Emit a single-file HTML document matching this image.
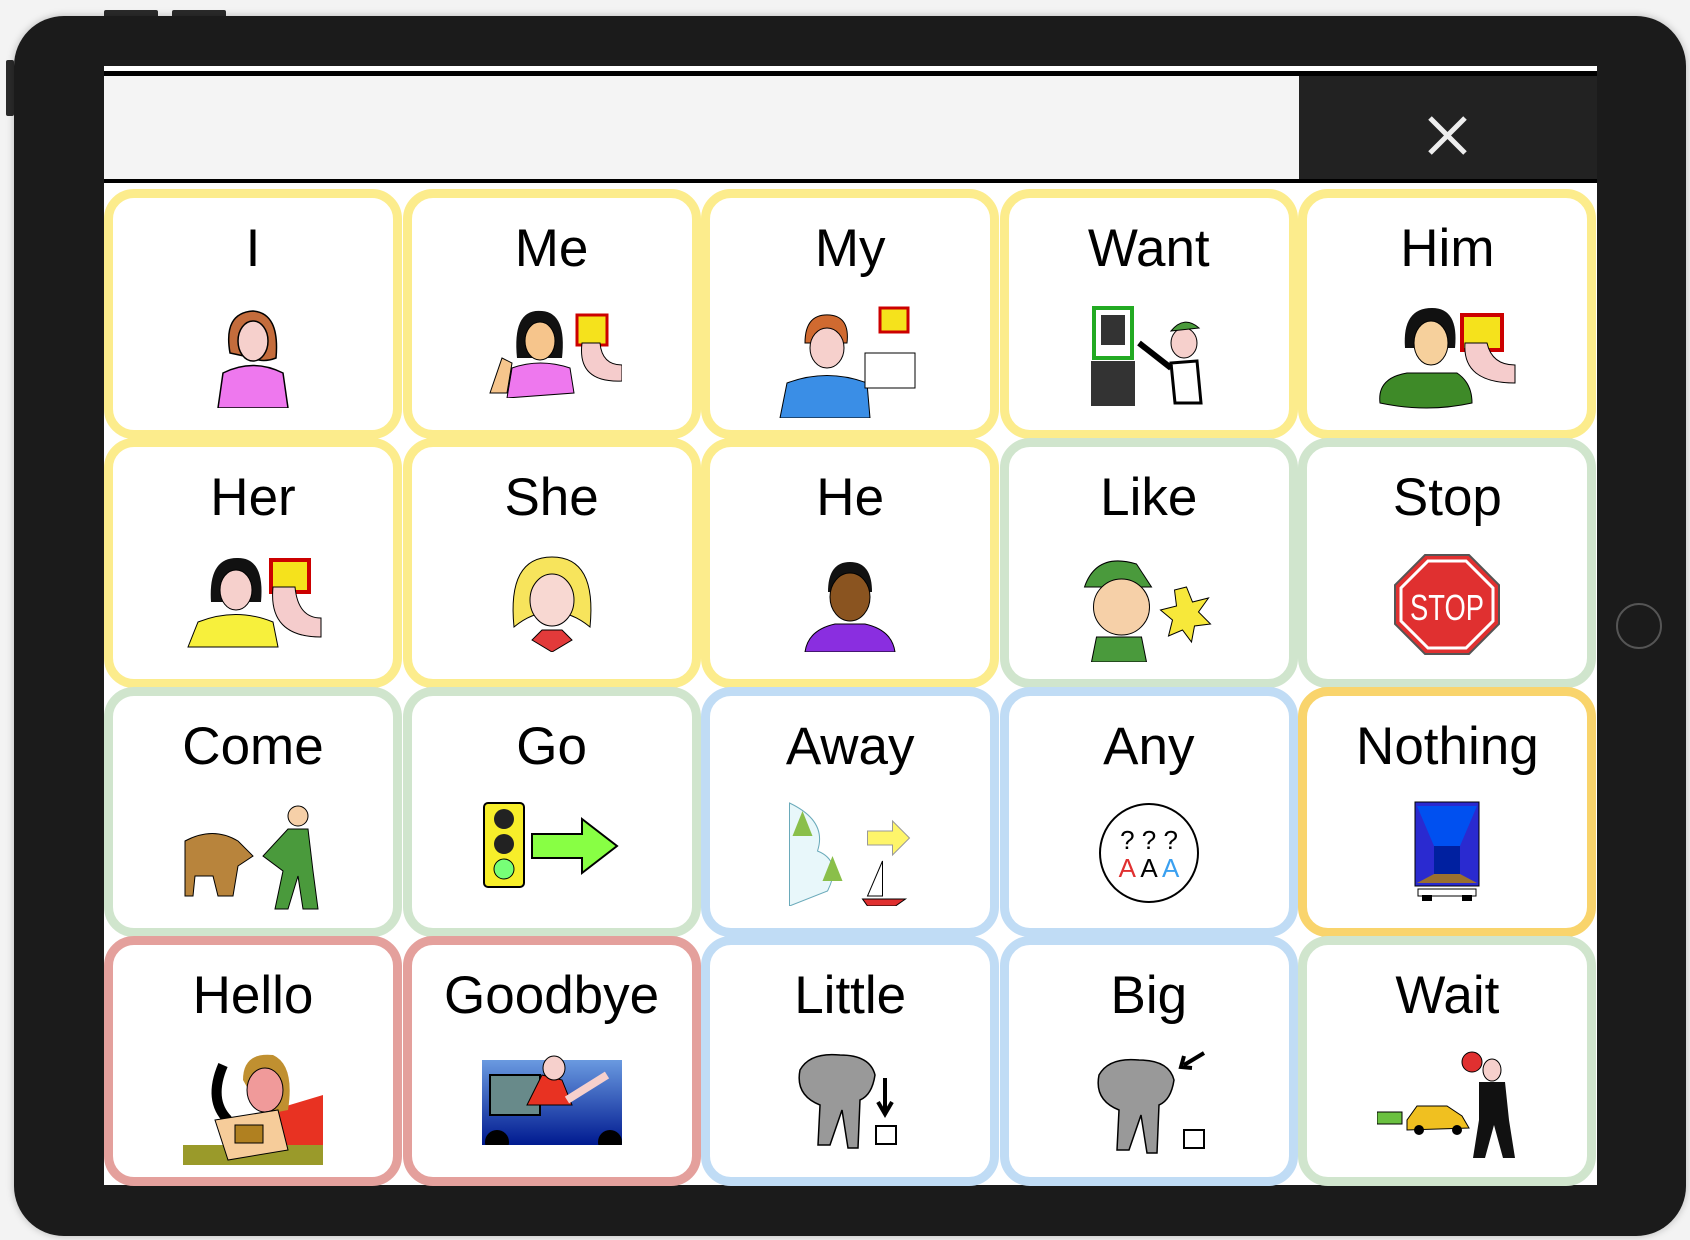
<!DOCTYPE html><html><head><meta charset="utf-8"><style>
*{margin:0;padding:0;box-sizing:border-box}
body{width:1690px;height:1240px;background:#f3f3f3;position:relative;overflow:hidden;font-family:"Liberation Sans",Arial,sans-serif}
.dev{position:absolute;left:14px;top:16px;width:1672px;height:1220px;background:#1b1b1b;border-radius:50px;box-shadow:0 0 8px rgba(0,0,0,.25)}
.btn{position:absolute;background:#2a2a2a;border-radius:2px}
.screen{position:absolute;left:104px;top:66px;width:1493px;height:1119px;background:#fff}
.hdr{position:absolute;left:0;top:5px;width:1493px;height:112px;border-top:5px solid #000;border-bottom:4px solid #000;background:#f4f4f4}
.close{position:absolute;right:0;top:0;width:298px;height:103px;background:#222}
.grid{position:absolute;left:0;top:123px;width:1493px;height:996px}
.c{position:absolute;width:298px;height:250px;border:9px solid;border-radius:30px;background:#fff;text-align:center}
.c span{display:block;margin-top:21px;font-size:53px;line-height:60px;color:#000}
.c svg{position:absolute;left:50%;top:105px;transform:translateX(-50%)}
.y{border-color:#fcec8c}.g{border-color:#d0e5cd}.b{border-color:#c0dcf5}.o{border-color:#f9d46c}.r{border-color:#e4a09c}
.home{position:absolute;left:1616px;top:603px;width:46px;height:46px;border:2px solid #555;border-radius:50%}
</style></head><body>
<div class="btn" style="left:104px;top:10px;width:54px;height:8px"></div>
<div class="btn" style="left:172px;top:10px;width:54px;height:8px"></div>
<div class="btn" style="left:6px;top:60px;width:8px;height:56px"></div>
<div class="dev"></div>
<div class="home"></div>
<div class="screen">
<div class="hdr"><div class="close"><svg width="298" height="103"><path d="M131 42 L166 77 M166 42 L131 77" stroke="#eee" stroke-width="5"/></svg></div></div>
<div class="grid">
<div class="c y" style="left:0;top:0"><span>I</span><svg width="90" height="105" viewBox="0 0 90 105"><path d="M22 50 Q15 10 45 8 Q72 10 68 55 Q55 60 45 55Z" fill="#c46c3c" stroke="#000" stroke-width="1.5"/><ellipse cx="45" cy="38" rx="15" ry="20" fill="#f6d0cc" stroke="#000" stroke-width="1.5"/><path d="M10 105 L15 70 Q45 55 75 70 L80 105Z" fill="#ee78ee" stroke="#000" stroke-width="1.5"/></svg></div>
<div class="c y" style="left:298.6px;top:0"><span>Me</span><svg width="140" height="95" viewBox="0 0 140 95"><path d="M35 55 Q30 5 60 8 Q85 10 80 55Z" fill="#111"/><ellipse cx="58" cy="38" rx="15" ry="19" fill="#f6c58c" stroke="#000"/><path d="M25 95 L30 65 Q58 55 88 65 L92 90Z" fill="#ee78ee" stroke="#000"/><path d="M8 90 L20 55 L30 60 L25 90Z" fill="#f6c58c" stroke="#000"/><rect x="95" y="12" width="30" height="30" fill="#f5e21c" stroke="#c00" stroke-width="3"/><path d="M100 40 Q95 80 140 78 L140 62 Q120 62 118 40Z" fill="#f5cccc" stroke="#000"/></svg></div>
<div class="c y" style="left:597.2px;top:0"><span>My</span><svg width="150" height="115" viewBox="0 0 150 115"><path d="M30 40 Q30 10 55 12 Q75 14 72 40Z" fill="#d06a30" stroke="#000"/><ellipse cx="52" cy="45" rx="17" ry="20" fill="#f6d0cc" stroke="#000"/><path d="M5 115 L12 80 Q52 65 92 80 L95 115Z" fill="#3a8ee6" stroke="#000"/><rect x="90" y="50" width="50" height="35" fill="#fff" stroke="#000"/><rect x="105" y="5" width="28" height="24" fill="#f5e21c" stroke="#c00" stroke-width="3"/></svg></div>
<div class="c y" style="left:895.8px;top:0"><span>Want</span><svg width="120" height="105" viewBox="0 0 120 105"><rect x="5" y="5" width="38" height="50" fill="#fff" stroke="#2a2" stroke-width="4"/><rect x="12" y="12" width="24" height="30" fill="#333"/><rect x="2" y="58" width="44" height="45" fill="#333"/><ellipse cx="95" cy="40" rx="13" ry="15" fill="#f6d0cc" stroke="#000"/><path d="M82 28 Q95 12 110 25Z" fill="#4a9a3c" stroke="#000"/><path d="M82 60 L108 58 L112 100 L86 100Z" fill="#fff" stroke="#000" stroke-width="3"/><path d="M50 40 L82 65" stroke="#000" stroke-width="6"/></svg></div>
<div class="c y" style="left:1194.4px;top:0"><span>Him</span><svg width="140" height="110" viewBox="0 0 140 110"><path d="M28 45 Q25 5 55 5 Q82 5 78 45Z" fill="#111"/><ellipse cx="54" cy="40" rx="17" ry="22" fill="#f6d09c" stroke="#000"/><path d="M3 100 Q0 75 30 70 L80 70 Q95 80 95 100 Q50 110 3 100Z" fill="#3e8a28" stroke="#000"/><rect x="85" y="12" width="40" height="35" fill="#f5e21c" stroke="#c00" stroke-width="4"/><path d="M88 40 Q85 80 138 80 L138 62 Q115 62 110 40Z" fill="#f5cccc" stroke="#000"/></svg></div>
<div class="c y" style="left:0;top:249px"><span>Her</span><svg width="140" height="100" viewBox="0 0 140 100"><path d="M28 50 Q25 5 55 6 Q82 6 78 50Z" fill="#111"/><ellipse cx="53" cy="38" rx="16" ry="20" fill="#f6d0cc" stroke="#000"/><path d="M5 95 L15 70 Q53 55 90 70 L95 95Z" fill="#f7f03c" stroke="#000"/><rect x="88" y="8" width="38" height="32" fill="#f5e21c" stroke="#c00" stroke-width="4"/><path d="M90 35 Q85 85 138 85 L138 66 Q115 66 112 35Z" fill="#f5cccc" stroke="#000"/></svg></div>
<div class="c y" style="left:298.6px;top:249px"><span>She</span><svg width="100" height="100" viewBox="0 0 100 100"><path d="M12 75 Q5 5 50 5 Q95 5 88 75 Q70 60 50 60 Q30 60 12 75Z" fill="#f7e45c" stroke="#000"/><ellipse cx="50" cy="48" rx="22" ry="26" fill="#f8d8d2" stroke="#000"/><path d="M30 88 L50 100 L70 88 L60 78 L40 78Z" fill="#e23a3a" stroke="#000"/></svg></div>
<div class="c y" style="left:597.2px;top:249px"><span>He</span><svg width="100" height="100" viewBox="0 0 100 100"><path d="M28 40 Q28 10 50 10 Q72 10 72 40Z" fill="#111"/><ellipse cx="50" cy="45" rx="20" ry="24" fill="#8a5420" stroke="#000"/><path d="M5 100 Q8 78 35 72 L65 72 Q92 78 95 100Z" fill="#8a2ee0" stroke="#000"/></svg></div>
<div class="c g" style="left:895.8px;top:249px"><span>Like</span><svg width="145" height="110" viewBox="0 0 145 110"><path d="M8 35 Q20 0 60 12 L75 35Z" fill="#4a9a3c" stroke="#000"/><ellipse cx="45" cy="55" rx="28" ry="28" fill="#f6d0a8" stroke="#000"/><path d="M15 110 L20 85 L65 85 L70 110Z" fill="#4a9a3c" stroke="#000"/><polygon points="110,35 116,50 132,46 122,60 134,72 118,74 115,90 106,78 92,84 96,68 84,58 100,54 98,38" fill="#f7e83a" stroke="#000"/></svg></div>
<div class="c g" style="left:1194.4px;top:249px"><span>Stop</span><svg width="110" height="105" viewBox="0 0 110 105"><polygon points="33,3 77,3 107,33 107,72 77,102 33,102 3,72 3,33" fill="#e03030" stroke="#555" stroke-width="2"/><polygon points="36,9 74,9 101,36 101,69 74,96 36,96 9,69 9,36" fill="none" stroke="#fff" stroke-width="3"/><text x="55" y="68" font-size="36" fill="#fff" text-anchor="middle" font-family="Liberation Sans" textLength="74" lengthAdjust="spacingAndGlyphs">STOP</text></svg></div>
<div class="c g" style="left:0;top:498px"><span>Come</span><svg width="140" height="110" viewBox="0 0 140 110"><path d="M2 40 Q30 25 55 40 L70 55 L55 65 L50 95 L35 95 L30 75 L12 75 L10 95 L2 95Z" fill="#b8843c" stroke="#000"/><ellipse cx="115" cy="15" rx="10" ry="10" fill="#f6d0a8" stroke="#000"/><path d="M105 28 L125 28 L130 70 L135 108 L120 108 L115 75 L105 108 L92 108 L100 70 L80 55Z" fill="#4a9a3c" stroke="#000"/></svg></div>
<div class="c g" style="left:298.6px;top:498px"><span>Go</span><svg width="140" height="90" viewBox="0 0 140 90"><rect x="2" y="2" width="40" height="84" rx="4" fill="#f7ee2a" stroke="#000" stroke-width="2"/><circle cx="22" cy="18" r="10" fill="#222"/><circle cx="22" cy="43" r="10" fill="#222"/><circle cx="22" cy="68" r="10" fill="#7f7" stroke="#000"/><polygon points="50,33 100,33 100,18 135,45 100,72 100,57 50,57" fill="#88ff44" stroke="#000" stroke-width="2"/></svg></div>
<div class="c b" style="left:597.2px;top:498px"><span>Away</span><svg width="125" height="105" viewBox="0 0 125 105"><path d="M2 2 Q40 20 30 50 Q55 60 40 90 L2 105Z" fill="#e8f7fa" stroke="#6aaaba"/><polygon points="15,10 25,35 5,35" fill="#8abf4a"/><polygon points="45,55 55,80 35,80" fill="#8abf4a"/><polygon points="80,30 105,30 105,20 122,37 105,54 105,44 80,44" fill="#fef56a" stroke="#999"/><polygon points="95,60 95,95 80,95" fill="#fff" stroke="#000"/><path d="M75 98 L118 98 L108 105 L80 105Z" fill="#e03030" stroke="#000"/></svg></div>
<div class="c b" style="left:895.8px;top:498px"><span>Any</span><svg width="104" height="104" viewBox="0 0 104 104"><circle cx="52" cy="52" r="49" fill="#fff" stroke="#000" stroke-width="2"/><text x="52" y="48" font-size="26" text-anchor="middle" font-family="Liberation Sans">? ? ?</text><text x="52" y="76" font-size="26" text-anchor="middle" font-family="Liberation Sans"><tspan fill="#e03030">A</tspan> <tspan fill="#000">A</tspan> <tspan fill="#3aa0f0">A</tspan></text></svg></div>
<div class="c o" style="left:1194.4px;top:498px"><span>Nothing</span><svg width="66" height="100" viewBox="0 0 66 100"><rect x="1" y="1" width="64" height="84" fill="#2a2ad0" stroke="#000"/><polygon points="3,5 63,5 46,45 20,45" fill="#0050f0"/><rect x="20" y="45" width="26" height="28" fill="#0020a0"/><polygon points="20,73 46,73 63,82 3,82" fill="#9a7030"/><rect x="4" y="88" width="58" height="7" fill="#fff" stroke="#000"/><rect x="8" y="94" width="10" height="6" fill="#000"/><rect x="48" y="94" width="10" height="6" fill="#000"/></svg></div>
<div class="c r" style="left:0;top:747px"><span>Hello</span><svg width="140" height="115" viewBox="0 0 140 115"><rect x="0" y="95" width="140" height="20" fill="#9a9a2a"/><path d="M90 60 L140 45 L140 95 L90 95Z" fill="#e83222"/><path d="M60 30 Q60 2 90 5 Q112 15 105 60 L80 65 Z" fill="#c09030"/><ellipse cx="82" cy="40" rx="18" ry="22" fill="#f09a9a" stroke="#000"/><path d="M40 15 Q25 50 45 70" stroke="#000" stroke-width="10" fill="none"/><path d="M32 70 L95 60 L105 100 L45 110Z" fill="#f6cc9a" stroke="#000"/><rect x="52" y="75" width="28" height="18" fill="#b08020" stroke="#000"/></svg></div>
<div class="c r" style="left:298.6px;top:747px"><span>Goodbye</span><svg width="140" height="95" viewBox="0 0 140 95"><defs><linearGradient id="car" x1="0" y1="0" x2="0" y2="1"><stop offset="0" stop-color="#6a9ae0"/><stop offset="1" stop-color="#001a90"/></linearGradient></defs><rect x="0" y="10" width="140" height="85" fill="url(#car)"/><rect x="8" y="25" width="50" height="40" fill="#688a8a" stroke="#000" stroke-width="2"/><path d="M45 55 L60 25 L80 30 L90 55Z" fill="#e83222" stroke="#000"/><ellipse cx="72" cy="18" rx="11" ry="12" fill="#f6d0cc" stroke="#000"/><path d="M85 50 L125 25" stroke="#f6d0cc" stroke-width="8"/><circle cx="15" cy="92" r="12" fill="#000"/><circle cx="128" cy="92" r="12" fill="#000"/></svg></div>
<div class="c b" style="left:597.2px;top:747px"><span>Little</span><svg width="120" height="100" viewBox="0 0 120 100"><path d="M10 20 Q20 2 50 5 Q80 5 85 25 Q82 45 70 50 L68 98 L58 98 L52 60 L40 95 L28 95 L30 55 Q5 45 10 20Z" fill="#999" stroke="#000" stroke-width="1.5"/><path d="M95 28 L95 62 M88 52 L95 64 L102 52" stroke="#000" stroke-width="4" fill="none"/><rect x="86" y="76" width="20" height="18" fill="#fff" stroke="#000" stroke-width="2"/></svg></div>
<div class="c b" style="left:895.8px;top:747px"><span>Big</span><svg width="120" height="105" viewBox="0 0 120 105"><path d="M10 25 Q20 7 50 10 Q80 10 85 30 Q82 50 70 55 L68 103 L58 103 L52 65 L40 100 L28 100 L30 60 Q5 50 10 25Z" fill="#999" stroke="#000" stroke-width="1.5"/><path d="M115 3 L95 15 M95 6 L92 17 L103 18" stroke="#000" stroke-width="4" fill="none"/><rect x="95" y="80" width="20" height="18" fill="#fff" stroke="#000" stroke-width="2"/></svg></div>
<div class="c g" style="left:1194.4px;top:747px"><span>Wait</span><svg width="140" height="110" viewBox="0 0 140 110"><rect x="0" y="62" width="25" height="12" fill="#6ac040" stroke="#000"/><path d="M30 70 L40 56 L70 56 L85 66 L92 78 L30 80Z" fill="#f0c020" stroke="#000"/><circle cx="42" cy="80" r="5" fill="#000"/><circle cx="80" cy="80" r="5" fill="#000"/><ellipse cx="115" cy="20" rx="9" ry="11" fill="#f6d0cc" stroke="#000"/><path d="M102 32 L128 32 L132 70 L138 108 L126 108 L117 75 L108 108 L96 108 L102 70Z" fill="#111"/><circle cx="95" cy="12" r="10" fill="#e03030" stroke="#000"/></svg></div>
</div></div>
</body></html>
